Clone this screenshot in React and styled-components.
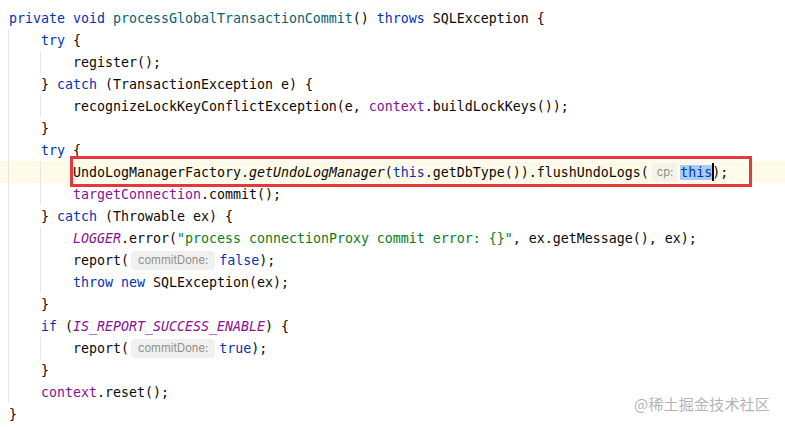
import React from "react";
import styled, { createGlobalStyle, css } from "styled-components";

const Global = createGlobalStyle`
  html, body { margin: 0; padding: 0; background: #ffffff; }
  body { width: 785px; height: 427px; overflow: hidden; }
`;

const Editor = styled.div`
  position: relative;
  width: 785px;
  height: 427px;
  box-sizing: border-box;
  padding-top: 7px;
  background: #ffffff;
  font-family: "DejaVu Sans Mono", "Liberation Mono", monospace;
  font-size: 13.29px;
  color: #080808;
`;

const Line = styled.div`
  position: relative;
  display: flex;
  align-items: center;
  height: 22px;
  padding-left: 9px;
  white-space: pre;
  background: ${(p) => (p.$current ? "#fdfbe8" : "transparent")};
`;

const Indent = styled.span`
  flex: none;
  width: 32px;
  height: 22px;
  box-shadow: inset 1px 0 0 #e6e6e6;
  margin-left: -1px;
  margin-right: 1px;
`;

const Code = styled.span`
  display: inline-flex;
  align-items: center;
  height: 22px;
`;

const Tok = styled.span`
  ${(p) =>
    p.$t === "kw" &&
    css`
      color: #0033b3;
    `}
  ${(p) =>
    p.$t === "decl" &&
    css`
      color: #00627a;
    `}
  ${(p) =>
    p.$t === "field" &&
    css`
      color: #871094;
    `}
  ${(p) =>
    p.$t === "str" &&
    css`
      color: #067d17;
    `}
  ${(p) =>
    p.$t === "it" &&
    css`
      font-style: italic;
    `}
  ${(p) =>
    p.$t === "const" &&
    css`
      color: #871094;
      font-style: italic;
    `}
  ${(p) =>
    p.$sel &&
    css`
      background: #a6ccf7;
    `}
`;

const Hint = styled.span`
  display: inline-block;
  font-family: Inter, "Noto Sans", sans-serif;
  font-size: 11.2px;
  color: #8e8e8e;
  background: ${(p) => (p.$onCurrent ? "#f5f3e7" : "#f0f0f0")};
  height: 19px;
  line-height: 19px;
  padding: 0 ${(p) => p.$pr}px 0 ${(p) => p.$pl}px;
  margin: 0 ${(p) => p.$mr}px 0 ${(p) => p.$ml}px;
  border-radius: 4px;
`;

const Caret = styled.span`
  display: inline-block;
  width: 2px;
  height: 18px;
  margin-right: -2px;
  background: #000000;
`;

const Frame = styled.div`
  position: absolute;
  left: 70px;
  right: 33px;
  top: -5px;
  bottom: -4px;
  border: 3px solid #e4393c;
  pointer-events: none;
`;

const Watermark = styled.div`
  position: absolute;
  right: 15px;
  bottom: 13px;
  font-family: "Noto Sans CJK SC", "Noto Sans", sans-serif;
  font-size: 15px;
  color: #b4b4b4;
  letter-spacing: 0.2px;
`;

const k = (s) => ({ t: "kw", s });
const p = (s) => ({ t: "plain", s });
const f = (s) => ({ t: "field", s });

const lines = [
  { i: 0, c: [k("private"), p(" "), k("void"), p(" "), { t: "decl", s: "processGlobalTransactionCommit" }, p("() "), k("throws"), p(" SQLException {")] },
  { i: 1, c: [k("try"), p(" {")] },
  { i: 2, c: [p("register();")] },
  { i: 1, c: [p("} "), k("catch"), p(" (TransactionException e) {")] },
  { i: 2, c: [p("recognizeLockKeyConflictException(e, "), f("context"), p(".buildLockKeys());")] },
  { i: 1, c: [p("}")] },
  { i: 1, c: [k("try"), p(" {")] },
  {
    i: 2,
    current: true,
    c: [
      p("UndoLogManagerFactory."),
      { t: "it", s: "getUndoLogManager" },
      p("("),
      k("this"),
      p(".getDbType()).flushUndoLogs("),
      { t: "hint", s: "cp:", pl: 5, pr: 4, ml: 3, mr: 3 },
      { t: "kw", s: "this", sel: true },
      { t: "caret" },
      p(");"),
    ],
  },
  { i: 2, c: [f("targetConnection"), p(".commit();")] },
  { i: 1, c: [p("} "), k("catch"), p(" (Throwable ex) {")] },
  { i: 2, c: [{ t: "const", s: "LOGGER" }, p(".error("), { t: "str", s: '"process connectionProxy commit error: {}"' }, p(", ex.getMessage(), ex);")] },
  { i: 2, c: [p("report("), { t: "hint", s: "commitDone:", pl: 7, pr: 7, ml: 2, mr: 4 }, k("false"), p(");")] },
  { i: 2, c: [k("throw"), p(" "), k("new"), p(" SQLException(ex);")] },
  { i: 1, c: [p("}")] },
  { i: 1, c: [k("if"), p(" ("), { t: "const", s: "IS_REPORT_SUCCESS_ENABLE" }, p(") {")] },
  { i: 2, c: [p("report("), { t: "hint", s: "commitDone:", pl: 7, pr: 7, ml: 2, mr: 4 }, k("true"), p(");")] },
  { i: 1, c: [p("}")] },
  { i: 1, c: [f("context"), p(".reset();")] },
  { i: 0, c: [p("}")] },
];

function renderToken(tok, idx, current) {
  if (tok.t === "hint") {
    return (
      <Hint key={idx} $pl={tok.pl} $pr={tok.pr} $ml={tok.ml} $mr={tok.mr} $onCurrent={current}>
        {tok.s}
      </Hint>
    );
  }
  if (tok.t === "caret") return <Caret key={idx} />;
  return (
    <Tok key={idx} $t={tok.t} $sel={tok.sel}>
      {tok.s}
    </Tok>
  );
}

export default function App() {
  return (
    <>
      <Global />
      <Editor>
        {lines.map((line, li) => (
          <Line key={li} $current={line.current}>
            {Array.from({ length: line.i }).map((_, j) => (
              <Indent key={j} />
            ))}
            <Code>{line.c.map((tok, ti) => renderToken(tok, ti, line.current))}</Code>
            {line.current && <Frame />}
          </Line>
        ))}
        <Watermark>@稀土掘金技术社区</Watermark>
      </Editor>
    </>
  );
}
